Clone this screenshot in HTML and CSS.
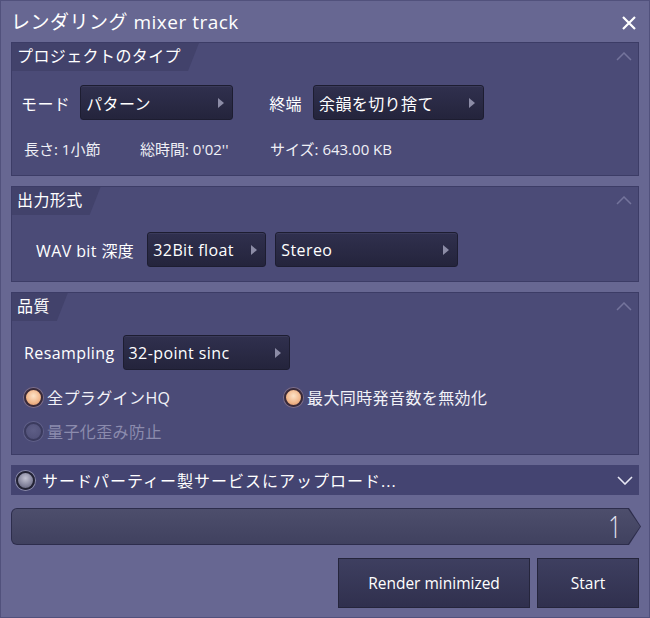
FILE: index.html
```html
<!DOCTYPE html>
<html lang="ja">
<head>
  <meta charset="UTF-8">
  <meta name="viewport" content="width=device-width, initial-scale=1.0">
  <title>レンダリング mixer track</title>
  <link rel="stylesheet" href="styles.css">
</head>
<body>
  <div class="window">
    <!-- Title bar -->
    <div class="titlebar">
      <span class="title">レンダリング mixer track</span>
      <svg class="close" width="14" height="14" viewBox="0 0 14 14">
        <path d="M1 1 L13 13 M13 1 L1 13" stroke="#fff" stroke-width="2.2"/>
      </svg>
    </div>

    <div class="content">
      <!-- Project type -->
      <section class="panel panel-project">
        <div class="panel-head">
          <div class="tab">プロジェクトのタイプ</div>
          <svg class="collapse" width="16" height="9" viewBox="0 0 16 9">
            <polyline points="1,8 8,1 15,8" fill="none" stroke="#74749c" stroke-width="1.5"/>
          </svg>
        </div>
        <div class="row row-mode">
          <span class="label">モード</span>
          <div class="select select-mode">パターン<span class="arrow"></span></div>
          <span class="label label-end">終端</span>
          <div class="select select-end">余韻を切り捨て<span class="arrow"></span></div>
        </div>
        <div class="row row-info">
          <span class="info info-len">長さ: 1小節</span>
          <span class="info info-time">総時間: 0'02''</span>
          <span class="info">サイズ: 643.00 KB</span>
        </div>
      </section>

      <!-- Output format -->
      <section class="panel panel-output">
        <div class="panel-head">
          <div class="tab">出力形式</div>
          <svg class="collapse" width="16" height="9" viewBox="0 0 16 9">
            <polyline points="1,8 8,1 15,8" fill="none" stroke="#74749c" stroke-width="1.5"/>
          </svg>
        </div>
        <div class="row row-wav">
          <span class="label">WAV bit 深度</span>
          <div class="select select-bit">32Bit float<span class="arrow"></span></div>
          <div class="select select-stereo">Stereo<span class="arrow"></span></div>
        </div>
      </section>

      <!-- Quality -->
      <section class="panel panel-quality">
        <div class="panel-head">
          <div class="tab">品質</div>
          <svg class="collapse" width="16" height="9" viewBox="0 0 16 9">
            <polyline points="1,8 8,1 15,8" fill="none" stroke="#74749c" stroke-width="1.5"/>
          </svg>
        </div>
        <div class="row row-resample">
          <span class="label">Resampling</span>
          <div class="select select-resample">32-point sinc<span class="arrow"></span></div>
        </div>
        <div class="checks">
          <label class="check"><span class="dot on"></span>全プラグインHQ</label>
          <label class="check"><span class="dot on"></span>最大同時発音数を無効化</label>
          <label class="check disabled"><span class="dot off"></span>量子化歪み防止</label>
        </div>
      </section>

      <!-- Upload -->
      <div class="upload">
        <span class="dot grey"></span>
        <span class="upload-text">サードパーティー製サービスにアップロード...</span>
        <svg class="expand" width="16" height="9" viewBox="0 0 16 9">
          <polyline points="1,1 8,8 15,1" fill="none" stroke="#e8e8f4" stroke-width="1.6"/>
        </svg>
      </div>

      <!-- Progress -->
      <div class="progress">
        <div class="progress-inner"><span class="count">1</span></div>
      </div>

      <div class="actions">
        <button class="btn btn-min">Render minimized</button>
        <button class="btn btn-start">Start</button>
      </div>
    </div>
  </div>
</body>
</html>
```

FILE: styles.css
```css
* {
  box-sizing: border-box;
}

body {
  margin: 0;
  padding: 0;
  font-family: "Open Sans", "Noto Sans CJK JP", sans-serif;
  font-size: 16px;
  letter-spacing: 0.4px;
  color: #f2f2f8;
  background: #666690;
}

.window {
  width: 650px;
  height: 618px;
  background: #676792;
  border: 1px solid #51517c;
  display: flex;
  flex-direction: column;
}

.titlebar {
  height: 41px;
  display: flex;
  align-items: center;
  justify-content: space-between;
  padding: 0 13px 0 10px;
}

.title {
  font-size: 19px;
  letter-spacing: 0.5px;
  color: #fff;
  padding-bottom: 1px;
}

.close {
  margin-top: 2px;
}

.content {
  padding: 0 10px 0 10px;
  display: flex;
  flex-direction: column;
}

.panel {
  background: #4b4b77;
  border: 1px solid #3c3c66;
  margin-bottom: 10px;
}

.panel-project {
  height: 134px;
}

.panel-output {
  height: 96px;
}

.panel-quality {
  height: 163px;
}

.panel-head {
  height: 28px;
  display: flex;
  justify-content: space-between;
  align-items: flex-start;
}

.tab {
  height: 28px;
  line-height: 26px;
  padding: 0 18px 0 5px;
  background: #42426b;
  color: #fff;
  clip-path: polygon(0 0, 100% 0, calc(100% - 11px) 100%, 0 100%);
}

.collapse {
  margin: 9px 6px 0 0;
}

.row {
  display: flex;
  align-items: center;
}

.row-mode {
  margin-top: 14px;
  padding-left: 9px;
}

.label {
  color: #fff;
  margin-right: 9px;
}

.label-end {
  margin-left: 36px;
  margin-right: 9px;
}

.select {
  height: 35px;
  display: flex;
  align-items: center;
  justify-content: space-between;
  padding: 0 8px 0 5px;
  background: linear-gradient(#30304e, #24243c);
  border: 1px solid #1d1d31;
  border-radius: 3px;
  box-shadow: inset 0 1px 0 #3a3a5a;
  color: #fff;
}

.arrow {
  width: 0;
  height: 0;
  border-top: 5px solid transparent;
  border-bottom: 5px solid transparent;
  border-left: 6px solid #8c8ca6;
}

.select-mode {
  width: 153px;
  margin-left: 1px;
}

.select-end {
  width: 171px;
  margin-left: 2px;
}

.row-info {
  margin-top: 18px;
  padding-left: 12px;
  font-size: 15px;
  letter-spacing: 0;
}

.info {
  color: #f0f0f6;
}

.info-len {
  width: 116px;
}

.info-time {
  width: 130px;
}

.row-wav {
  margin-top: 17px;
  padding-left: 24px;
}

.row-wav .label {
  margin-right: 13px;
}

.select-bit {
  width: 119px;
  margin-right: 9px;
}

.select-stereo {
  width: 183px;
}

.row-resample {
  margin-top: 14px;
  padding-left: 12px;
}

.row-resample .label {
  margin-right: 8px;
}

.select-resample {
  width: 167px;
}

.checks {
  display: grid;
  grid-template-columns: 260px 1fr;
  row-gap: 10px;
  margin-top: 15px;
  padding-left: 12px;
}

.check {
  display: flex;
  align-items: center;
  gap: 4px;
  color: #f2f2f8;
}

.check.disabled {
  color: #8c8cae;
}

.dot {
  width: 19px;
  height: 19px;
  border-radius: 50%;
  flex-shrink: 0;
}

.dot.on {
  background: radial-gradient(circle at 50% 40%, #fde3c8 0, #f2b98e 55%, #d98d5f 100%);
  border: 2px solid #3a2a38;
  box-shadow: 0 0 0 1px #7e6e88;
}

.dot.off {
  background: radial-gradient(circle at 50% 40%, #5e5e86 0, #4e4e76 100%);
  border: 2px solid #3b3b5e;
  box-shadow: 0 0 0 1px #606088;
}

.dot.grey {
  background: radial-gradient(circle at 50% 35%, #c2c2d2 0, #8888a0 55%, #5a5a72 100%);
  border: 2px solid #232334;
  box-shadow: 0 0 0 1px #8a8aa8;
}

.upload {
  height: 30px;
  background: #444471;
  display: flex;
  align-items: center;
  padding: 0 6px 0 5px;
  margin-bottom: 13px;
}

.upload-text {
  flex: 1;
  margin-left: 7px;
  letter-spacing: 1px;
  color: #fff;
}

.progress {
  height: 37px;
  width: 630px;
  background: #2d2d4c;
  border-radius: 6px 0 0 6px;
  clip-path: polygon(0 0, calc(100% - 12px) 0, 100% 50%, calc(100% - 12px) 100%, 0 100%);
  padding: 1px;
  margin-bottom: 13px;
}

.progress-inner {
  height: 100%;
  background: linear-gradient(#4d4e6c, #40415f);
  border-radius: 5px 0 0 5px;
  clip-path: polygon(0 0, calc(100% - 12px) 0, 100% 50%, calc(100% - 12px) 100%, 0 100%);
  display: flex;
  align-items: center;
  justify-content: flex-end;
  padding-right: 16px;
}

.count {
  font-family: "Open Sans", sans-serif;
  font-weight: 300;
  font-size: 31px;
  line-height: 1;
  color: #e6e6f2;
  transform: scaleX(0.75);
}

.actions {
  display: flex;
  justify-content: flex-end;
  gap: 7px;
}

.btn {
  height: 50px;
  background: linear-gradient(#3e3f60, #30304e);
  border: 1px solid #25253c;
  color: #fff;
  font-family: "Open Sans", "Noto Sans CJK JP", sans-serif;
  font-size: 15.5px;
  cursor: pointer;
}

.btn-min {
  width: 192px;
}

.btn-start {
  width: 102px;
}
```
